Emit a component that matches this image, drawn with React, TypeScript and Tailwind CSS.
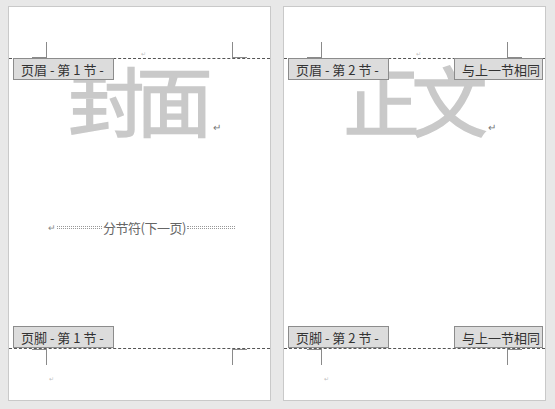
import React from 'react';

const cjk = { fontFamily: '"Noto Sans CJK SC", "Noto Sans", sans-serif' };

const Tag = ({ children, className }: { children: React.ReactNode; className: string }) => (
  <div
    className={`absolute h-[22px] px-[7px] flex items-center bg-[#dcdcdc] border border-[#8c8c8c] text-[13px] text-[#333] leading-none whitespace-nowrap ${className}`}
    style={cjk}
  >
    {children}
  </div>
);

const Page = ({
  section,
  title,
  showBreak,
  linked,
}: {
  section: number;
  title: string;
  showBreak?: boolean;
  linked?: boolean;
}) => (
  <div className="relative w-[263px] h-[395px] bg-white border border-[#c9c9c9] flex flex-col">
    {/* header margin */}
    <div className="h-[51px] flex items-end justify-between px-[23px] relative">
      <div className="w-[15px] h-[16px] border-r border-b border-[#8a8a8a]" />
      <span className="absolute bottom-[1px] left-[132px] text-[6px] leading-none text-[#c0c0c0]">↵</span>
      <div className="w-[15px] h-[16px] border-l border-b border-[#8a8a8a]" />
    </div>
    <div className="border-t border-dashed border-[#555]" />

    {/* body */}
    <div className="flex-1 flex flex-col items-center">
      <div className="flex items-end mt-[1px]" style={cjk}>
        <span className="text-[76px] leading-none font-normal text-[#c9c9c9] [-webkit-text-stroke:1.6px_#c9c9c9] pl-[10px] tracking-[-8px]">
          {title}
        </span>
        <span className="text-[10px] leading-none text-[#777] mb-[4px] ml-[8px]">↵</span>
      </div>
      {showBreak && (
        <div className="mt-[85px] w-full pl-[39px] flex items-center text-[13px] text-[#666]" style={cjk}>
          <span className="text-[9px] leading-none text-[#888] w-[9px]">↵</span>
          <div className="w-[45px] h-[3px] border-y border-dotted border-[#999]" />
          <span className="leading-none mx-[1px] tracking-[-0.5px]">分节符(下一页)</span>
          <div className="w-[48px] h-[3px] border-y border-dotted border-[#999]" />
        </div>
      )}
    </div>

    {/* footer margin */}
    <div className="border-t border-dashed border-[#555]" />
    <div className="h-[51px] flex items-start justify-between px-[23px] relative">
      <div className="w-[15px] h-[16px] border-r border-t border-[#8a8a8a]" />
      <span className="absolute top-[27px] left-[40px] text-[6px] leading-none text-[#c0c0c0]">↵</span>
      <div className="w-[15px] h-[16px] border-l border-t border-[#8a8a8a]" />
    </div>

    <Tag className="left-[4px] top-[51px] w-[101px]">页眉 - 第 {section} 节 -</Tag>
    <Tag className="left-[4px] top-[319px] w-[101px]">页脚 - 第 {section} 节 -</Tag>
    {linked && (
      <>
        <Tag className="right-[2px] top-[51px] w-[89px]">与上一节相同</Tag>
        <Tag className="right-[2px] top-[319px] w-[89px]">与上一节相同</Tag>
      </>
    )}
  </div>
);

export default function App() {
  return (
    <div className="w-[555px] h-[409px] bg-[#e8e8e8] pl-[8px] pt-[6px] flex gap-[12px] overflow-hidden">
      <Page section={1} title="封面" showBreak />
      <Page section={2} title="正文" linked />
    </div>
  );
}
